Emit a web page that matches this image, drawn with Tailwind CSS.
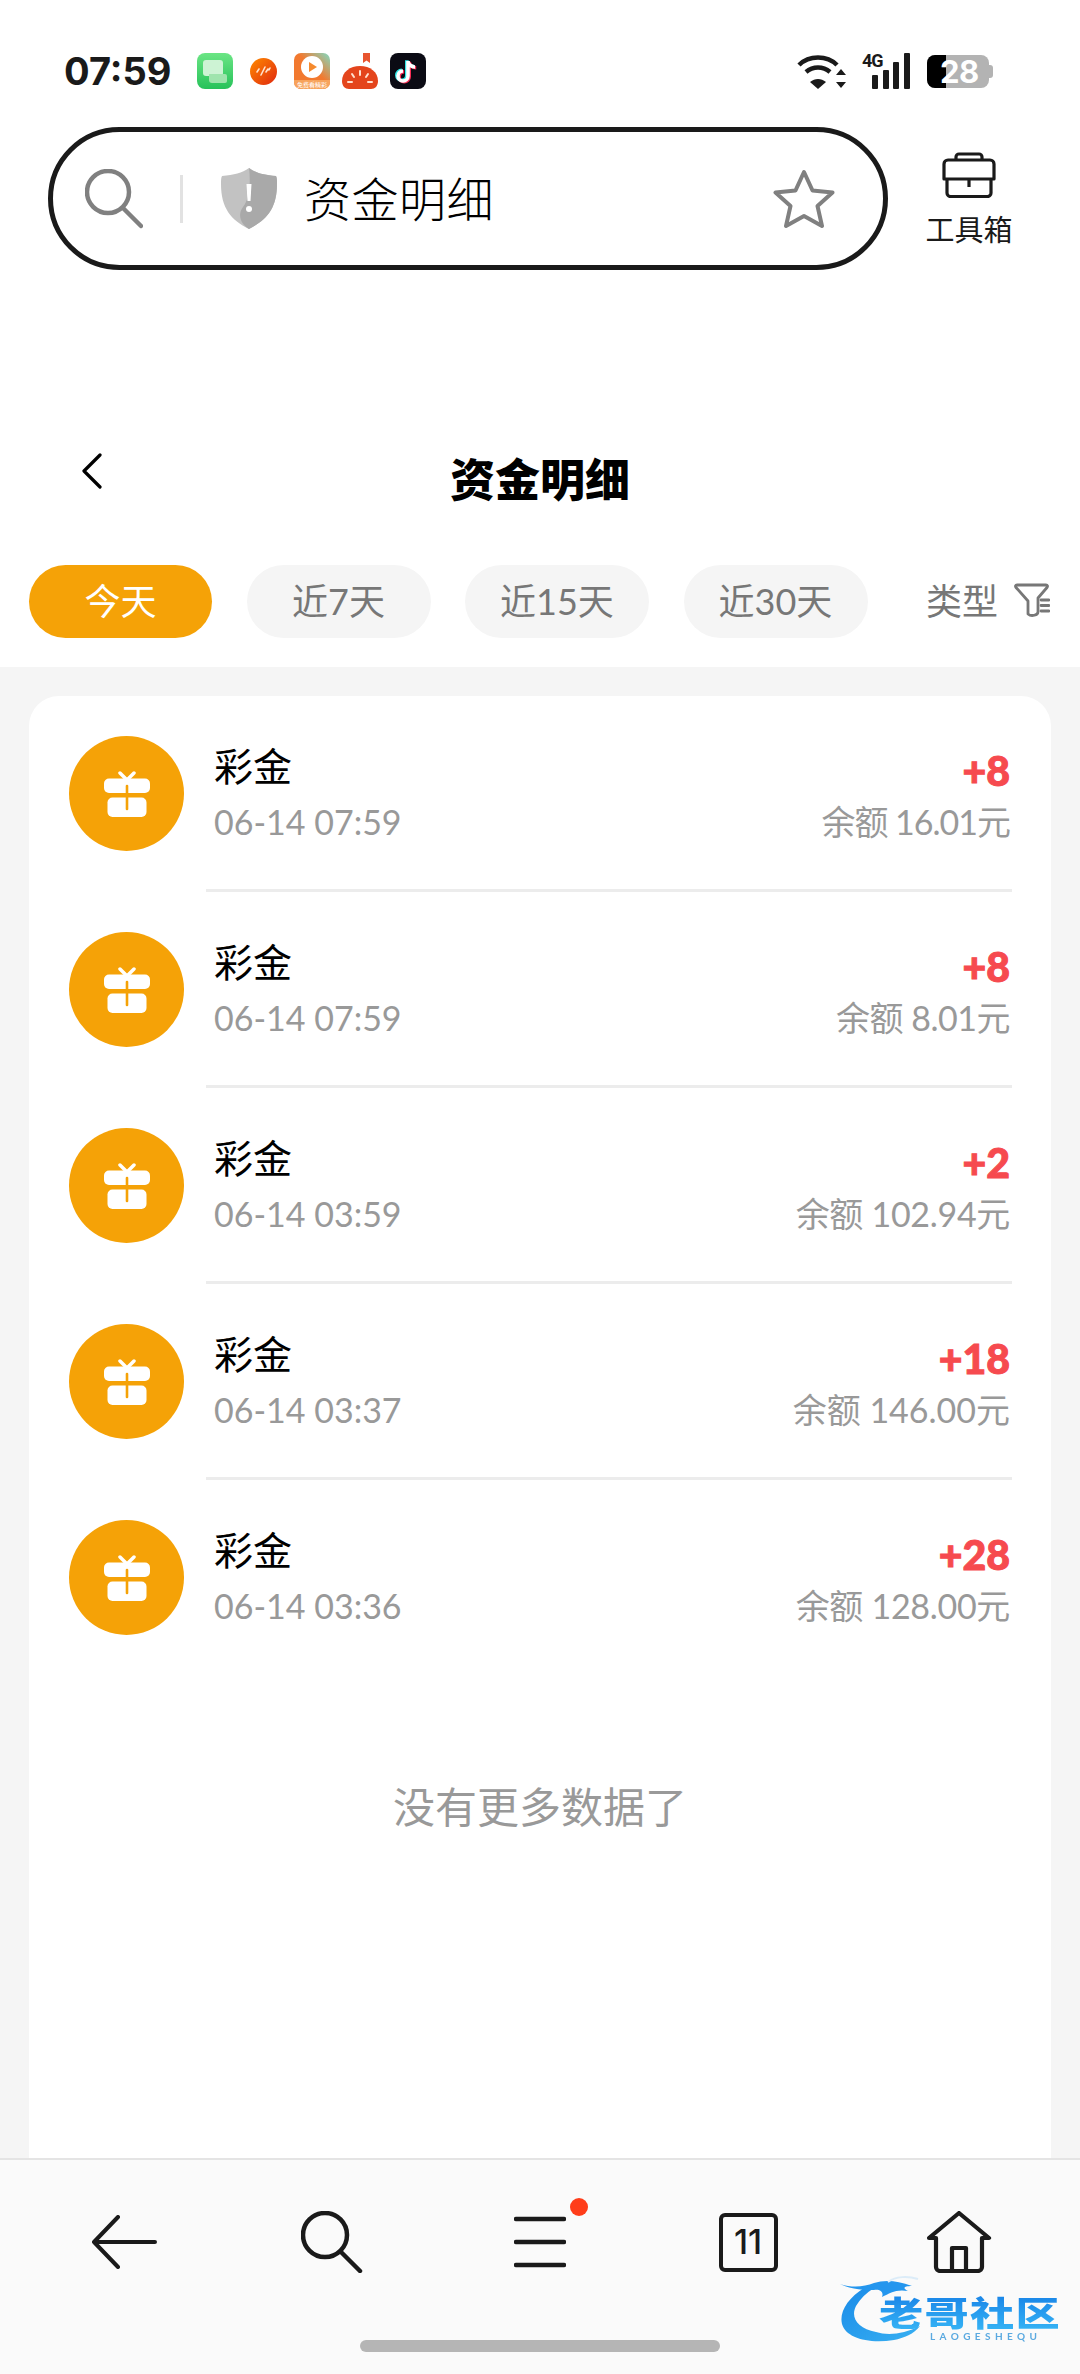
<!DOCTYPE html>
<html lang="zh-CN">
<head>
  <meta charset="UTF-8" />
  <meta name="viewport" content="width=device-width, initial-scale=1.0"/>
  <title>资金明细</title>
  <script src="https://cdn.jsdelivr.net/npm/@tailwindcss/browser@4"></script>
</head>
<body class="relative flex flex-col w-[1080px] h-[2374px] overflow-hidden bg-white font-['Lato','Noto_Sans_CJK_SC',sans-serif]">
  <svg class="hidden">
    <symbol id="gift" viewBox="0 0 46 46">
      <path d="M16 2l7 7 7-7" fill="none" stroke="#fff" stroke-width="3.5" stroke-linecap="round"/>
      <rect x="0" y="7.5" width="46" height="14.5" rx="5" fill="#fff"/>
      <rect x="3.5" y="26.5" width="39" height="19.5" rx="5" fill="#fff"/>
      <path d="M23 15v23" stroke="#f5a207" stroke-width="2.6" stroke-linecap="round"/>
    </symbol>
  </svg>

  <!-- Status bar -->
  <div class="flex items-center h-[40px] mt-[51px] pl-[64px] pr-[87px] shrink-0">
    <span class="w-[133px] text-[38px] leading-[40px] font-bold text-[#1a1a1a] font-['Inter',sans-serif]">07:59</span>
    <div class="flex items-center gap-[12px]">
      <svg width="36" height="36" viewBox="0 0 36 36">
        <defs><linearGradient id="msg" x1="0" y1="0" x2="0" y2="1"><stop offset="0" stop-color="#6be584"/><stop offset="1" stop-color="#27c25a"/></linearGradient></defs>
        <rect width="36" height="36" rx="8" fill="url(#msg)"/>
        <rect x="6" y="7" width="20" height="16" rx="3" fill="#cdf3d4"/>
        <path d="M12 21h16a2 2 0 0 1 2 2v5a2 2 0 0 1-2 2h-13a3 3 0 0 1-3-3z" fill="#9fe4ad"/>
      </svg>
      <svg width="27" height="27" viewBox="0 0 27 27" class="mx-[5px]">
        <defs><linearGradient id="lv" x1="0" y1="0" x2="1" y2="1"><stop offset="0" stop-color="#ff8a00"/><stop offset="1" stop-color="#e0280f"/></linearGradient></defs>
        <circle cx="13.5" cy="13.5" r="13.5" fill="url(#lv)"/>
        <path d="M7 14l2-3M11 17l4-8M16 14l2-3M19 12l1-2" stroke="#ffe3cf" stroke-width="1.6" stroke-linecap="round"/>
      </svg>
      <div class="relative w-[36px] h-[36px] rounded-[7px] overflow-hidden bg-[linear-gradient(45deg,#f2792f_55%,#7fdcc4)]">
        <svg width="36" height="36" viewBox="0 0 36 36">
          <circle cx="18" cy="14" r="11" fill="#fff"/>
          <path d="M15 9l8 5-8 5z" fill="#f58a2e"/>
        </svg>
        <span class="absolute left-0 right-0 bottom-0 h-[9px] bg-[#f7a35c] text-[6px] leading-[9px] text-center text-white">免费看精彩</span>
      </div>
      <svg width="36" height="36" viewBox="0 0 36 36">
        <path d="M21 0h7v10l-3.500-2.500L21 10z" fill="#e8552f"/>
        <path d="M0 28c0-9 8-15 18-15s18 6 18 15c0 5-3 8-7 8H7c-4 0-7-3-7-8z" fill="#e4451c"/>
        <path d="M18 18v4M10 21l2 3M26 21l-2 3M6 29h4M26 29h4" stroke="#ffe2d0" stroke-width="2" stroke-linecap="round"/>
      </svg>
      <svg width="36" height="36" viewBox="0 0 36 36">
        <rect width="36" height="36" rx="8" fill="#0b0b14"/>
        <g fill="none" stroke-width="3.6">
          <path d="M18 8v15a5 5 0 1 1-5-5M18 8c0 3 3 6 7 6" stroke="#2ee6e6" transform="translate(-1.200 -.8)"/>
          <path d="M18 8v15a5 5 0 1 1-5-5M18 8c0 3 3 6 7 6" stroke="#fa2d55" transform="translate(1.200 .8)"/>
          <path d="M18 8v15a5 5 0 1 1-5-5M18 8c0 3 3 6 7 6" stroke="#fff"/>
        </g>
      </svg>
    </div>
    <div class="flex items-center ml-auto">
      <svg width="50" height="36" viewBox="0 0 50 36" fill="none">
        <path d="M2 12c10-10 28-10 38 0" stroke="#1a1a1a" stroke-width="4.500"/>
        <path d="M9 19c7-6 17-6 24 0" stroke="#1a1a1a" stroke-width="4.500"/>
        <path d="M21 36l-8-7c5-4 11-4 16 0z" fill="#1a1a1a"/>
        <path d="M44 16l5 6h-10zM44 35l5-6h-10z" fill="#1a1a1a"/>
      </svg>
      <div class="relative w-[48px] h-[36px] ml-[15px]">
        <span class="absolute left-0 top-[-2px] text-[18px] leading-[20px] font-bold text-[#1a1a1a] font-['Roboto',sans-serif] tracking-[-1px]">4G</span>
        <svg width="48" height="36" viewBox="0 0 48 36" fill="#1a1a1a">
          <rect x="10" y="22" width="6" height="14" rx="1"/>
          <rect x="21" y="17" width="6" height="19" rx="1"/>
          <rect x="31" y="9" width="6" height="27" rx="1"/>
          <rect x="42" y="0" width="6" height="36" rx="1"/>
        </svg>
      </div>
      <div class="relative ml-[17px] w-[66px] h-[33px] flex items-center">
        <div class="w-[62px] h-[33px] rounded-[8px] overflow-hidden flex bg-[#b3b3b3]">
          <div class="w-[19px] bg-black"></div>
        </div>
        <div class="w-[4px] h-[13px] rounded-r-[3px] bg-[#b3b3b3]"></div>
        <span class="absolute left-[13px] top-0 text-[31px] leading-[33px] font-bold text-white font-['Inter',sans-serif] tracking-[-0.5px]">28</span>
      </div>
    </div>
  </div>

  <!-- Address bar -->
  <div class="flex items-center mt-[36px] pl-[48px] shrink-0">
    <div class="flex items-center w-[840px] h-[143px] border-[5px] border-[#1a1a1a] rounded-full pl-[32px] pr-[48px] bg-white">
      <svg width="58" height="60" viewBox="0 0 58 60" fill="none" stroke="#808080" stroke-width="4.500" stroke-linecap="round">
        <circle cx="23" cy="23" r="21"/>
        <path d="M38 39l18 18"/>
      </svg>
      <div class="w-[3px] h-[48px] ml-[37px] bg-[#e2e2e2]"></div>
      <svg width="56" height="61" viewBox="0 0 56 61" class="ml-[38px]">
        <path d="M28 0c7 5 15 7 27 8 1 2 1 4 1 8 0 24-10 36-28 45C10 52 0 40 0 16c0-4 0-6 1-8 12-1 20-3 27-8z" fill="#c2c2c2"/>
        <path d="M28 0c7 5 15 7 27 8 1 2 1 4 1 8 0 24-10 36-28 45-8-5-12-14-6-22 6-8 8-22 6-39z" fill="#a9a9a9"/>
        <path d="M25.500 16h5l-1 17h-3z" fill="#fff"/>
        <circle cx="28" cy="41" r="3" fill="#fff"/>
      </svg>
      <span class="ml-[27px] text-[47px] leading-[60px] text-black font-light tracking-[0.5px]">资金明细</span>
      <svg width="62" height="60" viewBox="0 0 62 60" fill="none" class="ml-auto" stroke="#808080" stroke-width="4" stroke-linejoin="round">
        <path d="M31 3l8.500 18.500 20 2-15 13.500 4.500 20L31 47 13 57l4.500-20-15-13.500 20-2z"/>
      </svg>
    </div>
    <div class="flex flex-col items-center w-[88px] ml-[37px] mt-[2px]">
      <svg width="54" height="46" viewBox="0 0 54 46" fill="none" stroke="#1a1a1a" stroke-width="3.200" stroke-linejoin="round">
        <path d="M14 8V5a3 3 0 0 1 3-3h20a3 3 0 0 1 3 3v3"/>
        <path d="M2 27V12a4 4 0 0 1 4-4h42a4 4 0 0 1 4 4v15z"/>
        <path d="M5 27v14a3.500 3.500 0 0 0 3.500 3.500h37A3.500 3.500 0 0 0 49 41V27"/>
        <path d="M27 27v8"/>
      </svg>
      <span class="mt-[14px] text-[29px] leading-[36px] text-[#1a1a1a]">工具箱</span>
    </div>
  </div>

  <!-- Page header -->
  <div class="grid grid-cols-[1fr_auto_1fr] items-center h-[60px] mt-[180px] shrink-0">
    <svg width="20" height="36" viewBox="0 0 20 36" fill="none" stroke="#000" stroke-width="3.200" stroke-linecap="round" stroke-linejoin="round" class="ml-[82px] -mt-[18px]">
      <path d="M18 2L2 18l16 16"/>
    </svg>
    <h1 class="text-[45px] leading-[60px] font-black text-black">资金明细</h1>
  </div>

  <!-- Range tabs -->
  <div class="flex items-center h-[73px] mt-[55px] mb-[29px] pl-[29px] gap-[34.5px] shrink-0 text-[36px] text-[#777]">
    <div class="flex items-center justify-center w-[183px] h-[73px] pb-[2px] rounded-full bg-[#f5a207] text-white">今天</div>
    <div class="flex items-center justify-center w-[184px] h-[73px] pb-[2px] rounded-full bg-[#f5f5f5]">近7天</div>
    <div class="flex items-center justify-center w-[184px] h-[73px] pb-[2px] rounded-full bg-[#f5f5f5]">近15天</div>
    <div class="flex items-center justify-center w-[184px] h-[73px] pb-[2px] rounded-full bg-[#f5f5f5]">近30天</div>
    <div class="flex items-center ml-[24px] gap-[16px] pb-[2px]">
      <span>类型</span>
      <svg width="36" height="35" viewBox="0 0 36 35" fill="none" stroke="#777" stroke-width="2.800" stroke-linecap="round" stroke-linejoin="round">
        <path d="M3 2h29c1.500 0 2 1 1 2.500L24 15v14c0 3-6.500 5-10 2V18L2 4.500C1 3 1.500 2 3 2z"/>
        <path d="M27 17h8M27 22.500h8M27 28h8"/>
      </svg>
    </div>
  </div>

  <!-- Records -->
  <main class="flex-1 min-h-0 bg-[#f5f5f5] pt-[29px] px-[29px]">
    <div class="h-full bg-white rounded-t-[30px]">
      <div class="flex items-center h-[193px] pt-[40px] pb-[38px] pl-[40px] pr-[41px]">
        <div class="flex items-center justify-center w-[115px] h-[115px] rounded-full bg-[#f5a207]"><svg width="46" height="46"><use href="#gift"/></svg></div>
        <div class="ml-[30px] flex flex-col gap-[10px]">
          <span class="text-[39px] leading-[46px] text-black">彩金</span>
          <span class="text-[34px] leading-[46px] text-[#999]">06-14 07:59</span>
        </div>
        <div class="ml-auto flex flex-col items-end gap-[5px]">
          <span class="mt-[5px] text-[41px] leading-[46px] font-black text-[#f64a4f] [-webkit-text-stroke:1px_#f64a4f]">+8</span>
          <span class="text-[34px] leading-[46px] text-[#999] tracking-[-1px]">余额 16.01元</span>
        </div>
      </div>
      <div class="h-[3px] ml-[177px] mr-[39px] bg-[#ececec]"></div>

      <div class="flex items-center h-[193px] pt-[40px] pb-[38px] pl-[40px] pr-[41px]">
        <div class="flex items-center justify-center w-[115px] h-[115px] rounded-full bg-[#f5a207]"><svg width="46" height="46"><use href="#gift"/></svg></div>
        <div class="ml-[30px] flex flex-col gap-[10px]">
          <span class="text-[39px] leading-[46px] text-black">彩金</span>
          <span class="text-[34px] leading-[46px] text-[#999]">06-14 07:59</span>
        </div>
        <div class="ml-auto flex flex-col items-end gap-[5px]">
          <span class="mt-[5px] text-[41px] leading-[46px] font-black text-[#f64a4f] [-webkit-text-stroke:1px_#f64a4f]">+8</span>
          <span class="text-[34px] leading-[46px] text-[#999] tracking-[-0.5px]">余额 8.01元</span>
        </div>
      </div>
      <div class="h-[3px] ml-[177px] mr-[39px] bg-[#ececec]"></div>

      <div class="flex items-center h-[193px] pt-[40px] pb-[38px] pl-[40px] pr-[41px]">
        <div class="flex items-center justify-center w-[115px] h-[115px] rounded-full bg-[#f5a207]"><svg width="46" height="46"><use href="#gift"/></svg></div>
        <div class="ml-[30px] flex flex-col gap-[10px]">
          <span class="text-[39px] leading-[46px] text-black">彩金</span>
          <span class="text-[34px] leading-[46px] text-[#999]">06-14 03:59</span>
        </div>
        <div class="ml-auto flex flex-col items-end gap-[5px]">
          <span class="mt-[5px] text-[41px] leading-[46px] font-black text-[#f64a4f] [-webkit-text-stroke:1px_#f64a4f]">+2</span>
          <span class="text-[34px] leading-[46px] text-[#999] tracking-[-0.3px]">余额 102.94元</span>
        </div>
      </div>
      <div class="h-[3px] ml-[177px] mr-[39px] bg-[#ececec]"></div>

      <div class="flex items-center h-[193px] pt-[40px] pb-[38px] pl-[40px] pr-[41px]">
        <div class="flex items-center justify-center w-[115px] h-[115px] rounded-full bg-[#f5a207]"><svg width="46" height="46"><use href="#gift"/></svg></div>
        <div class="ml-[30px] flex flex-col gap-[10px]">
          <span class="text-[39px] leading-[46px] text-black">彩金</span>
          <span class="text-[34px] leading-[46px] text-[#999]">06-14 03:37</span>
        </div>
        <div class="ml-auto flex flex-col items-end gap-[5px]">
          <span class="mt-[5px] text-[41px] leading-[46px] font-black text-[#f64a4f] [-webkit-text-stroke:1px_#f64a4f]">+18</span>
          <span class="text-[34px] leading-[46px] text-[#999]">余额 146.00元</span>
        </div>
      </div>
      <div class="h-[3px] ml-[177px] mr-[39px] bg-[#ececec]"></div>

      <div class="flex items-center h-[193px] pt-[40px] pb-[38px] pl-[40px] pr-[41px]">
        <div class="flex items-center justify-center w-[115px] h-[115px] rounded-full bg-[#f5a207]"><svg width="46" height="46"><use href="#gift"/></svg></div>
        <div class="ml-[30px] flex flex-col gap-[10px]">
          <span class="text-[39px] leading-[46px] text-black">彩金</span>
          <span class="text-[34px] leading-[46px] text-[#999]">06-14 03:36</span>
        </div>
        <div class="ml-auto flex flex-col items-end gap-[5px]">
          <span class="mt-[5px] text-[41px] leading-[46px] font-black text-[#f64a4f] [-webkit-text-stroke:1px_#f64a4f]">+28</span>
          <span class="text-[34px] leading-[46px] text-[#999] tracking-[-0.3px]">余额 128.00元</span>
        </div>
      </div>

      <p class="mt-[109px] text-center text-[42px] leading-[50px] text-[#999]">没有更多数据了</p>
    </div>
  </main>

  <!-- Browser toolbar -->
  <nav class="shrink-0 h-[216px] border-t-2 border-[#e4e4e4] bg-[#fafafa]">
    <div class="grid grid-cols-5 h-[84px] mt-[40px] px-[20px] items-center justify-items-center">
      <svg width="66" height="54" viewBox="0 0 66 54" fill="none" stroke="#1a1a1a" stroke-width="4" stroke-linecap="round" stroke-linejoin="round">
        <path d="M64 27H3M27 2L3 27l24 25"/>
      </svg>
      <svg width="62" height="62" viewBox="0 0 62 62" fill="none" stroke="#1a1a1a" stroke-width="4.500" stroke-linecap="round">
        <circle cx="24" cy="24" r="22"/>
        <path d="M40 41l19 19"/>
      </svg>
      <div class="relative">
        <svg width="52" height="52" viewBox="0 0 52 52" fill="none" stroke="#1a1a1a" stroke-width="4.500" stroke-linecap="round" class="block">
          <path d="M2 3h48M2 26h48M2 49h48"/>
        </svg>
        <span class="absolute right-[-22px] top-[-18px] w-[18px] h-[18px] rounded-full bg-[#ff3d1a]"></span>
      </div>
      <div class="flex items-center justify-center w-[59px] h-[59px] border-[4px] border-[#1a1a1a] rounded-[6px] text-[34px] leading-none font-medium text-[#1a1a1a] font-['Inter',sans-serif]">11</div>
      <svg width="66" height="62" viewBox="0 0 66 62" fill="none" stroke="#1a1a1a" stroke-width="4.200" stroke-linejoin="round" stroke-linecap="round" class="ml-[5px]">
        <path d="M3 27L33 2l30 25h-7v29a4 4 0 0 1-4 4H14a4 4 0 0 1-4-4V27z"/>
        <path d="M26 60V37h14v23"/>
      </svg>
    </div>
    <div class="w-[360px] h-[12px] mt-[56px] mx-auto rounded-full bg-[#b5b5b5]"></div>
  </nav>

  <!-- Watermark -->
  <div class="absolute left-[838px] top-[2272px] w-[226px] h-[76px] blur-[0.6px]">
    <svg width="100" height="76" viewBox="0 0 100 76" class="absolute left-0 top-0">
      <defs><linearGradient id="wm" x1="0" y1="0" x2="1" y2="1"><stop offset="0" stop-color="#1a8be8"/><stop offset="1" stop-color="#38b0f2"/></linearGradient></defs>
      <path d="M26 16C10 26 1 40 4 52c4 14 26 20 52 16 10-2 20-6 26-14-16 8-32 10-44 6C20 56 12 46 18 34c4-7 10-13 18-18z" fill="url(#wm)"/>
      <path d="M2 12c12 4 24 3 34-1 10-3 22-3 38 3-8 0-10 2-4 5-12-2-18 2-26 6 2-5-2-8-8-7C28 18 14 18 2 12z" fill="#2496ee"/>
      <path d="M50 10c8-6 20-6 30-3" fill="none" stroke="#dcecf8" stroke-width="2"/>
    </svg>
    <span class="absolute left-[41px] top-[24px] origin-left scale-x-[1.3] text-[34px] leading-[34px] font-black tracking-[1px] whitespace-nowrap text-transparent bg-clip-text bg-[linear-gradient(#1a86e8,#35b3f5)]">老哥社区</span>
    <span class="absolute left-[92px] top-[59px] text-[10px] leading-[10px] font-bold tracking-[4.4px] whitespace-nowrap text-[#5aa9e0]">LAOGESHEQU</span>
  </div>
</body>
</html>
